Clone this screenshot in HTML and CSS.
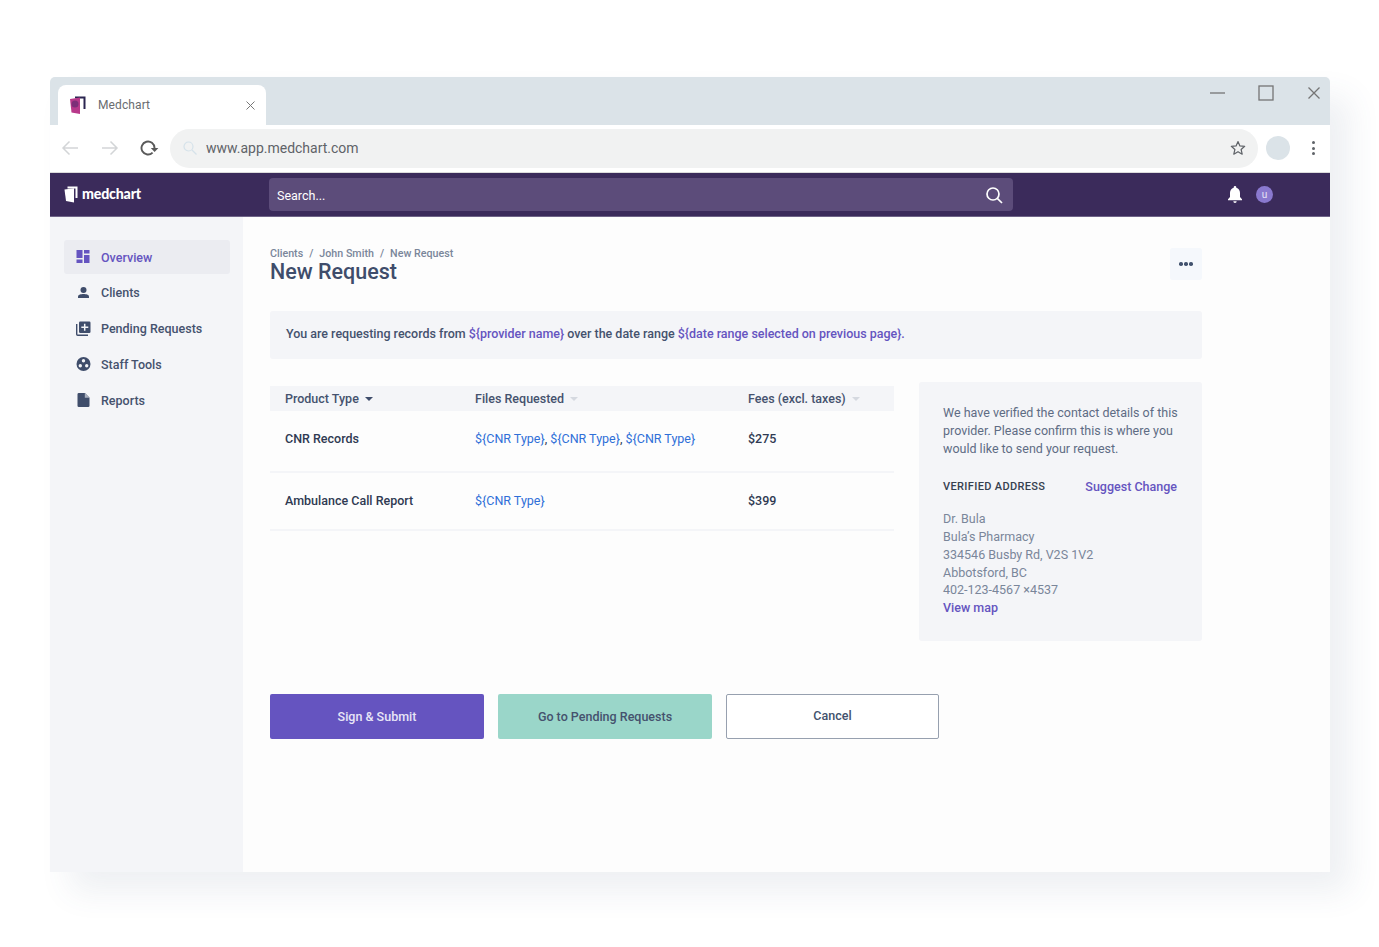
FILE: index.html
```html
<!DOCTYPE html>
<html lang="en">
<head>
<meta charset="utf-8">
<title>Medchart</title>
<link rel="stylesheet" href="styles.css">
</head>
<body>
<div class="window">
  <div class="tabstrip">
    <div class="tab">
      <svg class="favicon" width="18" height="20" viewBox="0 0 18 20"><path d="M6 1.500h10.500V14h-2V3.500H6z" fill="#2b2550"/><path d="M1 4l10-1.500V19L2.500 17.500z" fill="#b8398a"/><circle cx="6" cy="9" r="3.500" fill="#7d2f78"/></svg>
      <span class="tab-title">Medchart</span>
      <svg class="tab-close" width="9" height="9" viewBox="0 0 9 9"><path d="M.5.5l8 8M8.500.5l-8 8" stroke="#777" stroke-width="1" fill="none"/></svg>
    </div>
    <div class="window-controls">
      <svg width="16" height="16" viewBox="0 0 16 16"><path d="M0 8h15" stroke="#757575" stroke-width="1.300"/></svg>
      <svg width="16" height="16" viewBox="0 0 16 16"><rect x="1" y="1" width="14" height="14" fill="none" stroke="#757575" stroke-width="1.300"/></svg>
      <svg width="16" height="16" viewBox="0 0 16 16"><path d="M2.500 2.500l11 11M13.500 2.500l-11 11" stroke="#757575" stroke-width="1.300" fill="none"/></svg>
    </div>
  </div>

  <div class="toolbar">
    <svg class="nav-arrow" width="18" height="16" viewBox="0 0 18 16"><path d="M17 8H2M8.500 1.500L2 8l6.500 6.500" fill="none" stroke="#d3d5d7" stroke-width="1.500"/></svg>
    <svg class="nav-arrow" width="18" height="16" viewBox="0 0 18 16"><path d="M1 8h15M9.500 1.500L16 8l-6.500 6.500" fill="none" stroke="#d3d5d7" stroke-width="1.500"/></svg>
    <svg class="reload" width="21" height="18" viewBox="0 0 21 18"><path d="M12.600 13.600A6.500 6.500 0 1 1 14.500 9" fill="none" stroke="#5a5a5a" stroke-width="1.900"/><path d="M10.800 9h7.600L14.600 13z" fill="#5a5a5a"/></svg>
    <div class="omnibox">
      <svg width="14" height="14" viewBox="0 0 14 14"><circle cx="5.500" cy="5.500" r="4.500" fill="none" stroke="#d5e2ea" stroke-width="1.200"/><path d="M9 9l4.500 4.500" stroke="#d5e2ea" stroke-width="1.200"/></svg>
      <span class="url">www.app.medchart.com</span>
      <svg class="star" width="16" height="16" viewBox="0 0 16 16"><path d="M8 1.500l1.900 4.400 4.800.4-3.600 3.200 1.100 4.700L8 11.700l-4.200 2.500 1.100-4.700L1.300 6.300l4.800-.4z" fill="none" stroke="#5f6368" stroke-width="1.200" stroke-linejoin="round"/></svg>
    </div>
    <span class="profile"></span>
    <span class="kebab"><i></i><i></i><i></i></span>
  </div>

  <header class="appbar">
    <div class="brand">
      <svg width="14" height="17" viewBox="0 0 14 17"><path d="M3.500 0.500H13.500V12H11.500V2.500H3.500z" fill="#fff"/><path d="M0.500 3.500l9.500-1.200V16.500L2 15z" fill="#fff"/></svg>
      <span class="brand-name">medchart</span>
    </div>
    <div class="search">
      <span>Search...</span>
      <svg width="18" height="18" viewBox="0 0 18 18"><circle cx="8" cy="8" r="6" fill="none" stroke="#fff" stroke-width="1.700"/><path d="M12.300 12.300L17 17" stroke="#fff" stroke-width="1.700"/></svg>
    </div>
    <div class="appbar-actions">
      <svg width="16" height="19" viewBox="0 0 16 19"><path d="M8 1a1.300 1.300 0 0 1 1.300 1.300v.4C11.800 3.300 13 5.400 13 8v4l2 2.300v1H1v-1L3 12V8c0-2.600 1.200-4.700 3.700-5.300v-.4A1.300 1.300 0 0 1 8 1z" fill="#fff"/><path d="M6.300 16.300h3.400a1.700 1.700 0 0 1-3.400 0z" fill="#fff"/></svg>
      <span class="avatar">u</span>
    </div>
  </header>

  <div class="body">
    <nav class="sidebar">
      <a class="nav-item active">
        <svg width="14" height="14" viewBox="0 0 14 14"><path d="M0 0h6v8H0zM0 9.500h6V13H0zM7.500 0H13v3.500H7.500zM7.500 5H13v8H7.500z" fill="#6554c0"/></svg>
        <span>Overview</span>
      </a>
      <a class="nav-item">
        <svg width="14" height="14" viewBox="0 0 14 14"><circle cx="7" cy="4" r="3" fill="#3f4d6b"/><path d="M1.500 12v-1.500C1.500 8.700 4.500 8 7 8s5.500.7 5.500 2.500V12z" fill="#3f4d6b"/></svg>
        <span>Clients</span>
      </a>
      <a class="nav-item">
        <svg width="15" height="15" viewBox="0 0 15 15"><path d="M0.700 3v10.300a1 1 0 0 0 1 1H12" fill="none" stroke="#3f4d6b" stroke-width="1.400"/><rect x="3" y="0.500" width="11.500" height="11.500" rx="1.200" fill="#3f4d6b"/><path d="M8.700 2.800v7M5.300 6.300h7" stroke="#f4f5f8" stroke-width="1.500"/></svg>
        <span>Pending Requests</span>
      </a>
      <a class="nav-item">
        <svg width="14" height="14" viewBox="0 0 14 14"><circle cx="7" cy="7" r="7" fill="#3f4d6b"/><circle cx="7" cy="3.800" r="1.700" fill="#f4f5f8"/><circle cx="3.800" cy="8.800" r="1.700" fill="#f4f5f8"/><circle cx="10.200" cy="8.800" r="1.700" fill="#f4f5f8"/></svg>
        <span>Staff Tools</span>
      </a>
      <a class="nav-item">
        <svg width="12" height="14" viewBox="0 0 12 14"><path d="M1.300 0H7.500L12 4.500V12.700a1.300 1.300 0 0 1-1.300 1.300H1.300A1.300 1.300 0 0 1 0 12.700V1.300A1.300 1.300 0 0 1 1.300 0z" fill="#3f4d6b"/><path d="M7.300 0v4.700H12" fill="#f4f5f8" fill-opacity=".6"/></svg>
        <span>Reports</span>
      </a>
    </nav>

    <main class="content">
      <div class="page-head">
        <div>
          <div class="crumbs"><span>Clients</span><span>/</span><span>John Smith</span><span>/</span><span>New Request</span></div>
          <h1>New Request</h1>
        </div>
        <button class="more" aria-label="More"><i></i><i></i><i></i></button>
      </div>

      <p class="notice">You are requesting records from <a>${provider name}</a> over the date range <a>${date range selected on previous page}.</a></p>

      <div class="columns">
        <div class="products">
          <div class="row head">
            <span class="c1">Product Type <i class="caret dark"></i></span>
            <span class="c2">Files Requested <i class="caret"></i></span>
            <span class="c3">Fees (excl. taxes) <i class="caret"></i></span>
          </div>
          <div class="row first">
            <span class="c1">CNR Records</span>
            <span class="c2"><a>${CNR Type}</a>, <a>${CNR Type}</a>, <a>${CNR Type}</a></span>
            <span class="c3">$275</span>
          </div>
          <div class="row second">
            <span class="c1">Ambulance Call Report</span>
            <span class="c2"><a>${CNR Type}</a></span>
            <span class="c3">$399</span>
          </div>
        </div>

        <aside class="verify">
          <p>We have verified the contact details of this provider. Please confirm this is where you would like to send your request.</p>
          <div class="verify-head"><strong>VERIFIED ADDRESS</strong><a>Suggest Change</a></div>
          <address>Dr. Bula<br>Bula’s Pharmacy<br>334546 Busby Rd, V2S 1V2<br>Abbotsford, BC<br>402-123-4567 ×4537<br><a>View map</a></address>
        </aside>
      </div>

      <div class="actions">
        <button class="btn primary">Sign &amp; Submit</button>
        <button class="btn mint">Go to Pending Requests</button>
        <button class="btn outline">Cancel</button>
      </div>
    </main>
  </div>
</div>
</body>
</html>
```
FILE: styles.css
```css
* { box-sizing: border-box; }
html, body { margin: 0; height: 100%; }
body {
  background: #fff;
  font-family: Roboto, "Liberation Sans", sans-serif;
  padding: 77px 49px 0 50px;
  overflow: hidden;
}
a { color: inherit; text-decoration: none; }
svg { display: block; flex: none; }

.window {
  height: 795px;
  display: flex;
  flex-direction: column;
  background: #fdfdfd;
  border-radius: 5px 5px 0 0;
  box-shadow: 20px 20px 32px rgba(70, 90, 120, 0.09);
}

.tabstrip {
  height: 48px;
  flex: none;
  background: #dbe3e8;
  border-radius: 5px 5px 0 0;
  display: flex;
  justify-content: space-between;
  align-items: flex-start;
  padding: 8px 8px 0;
}
.tab {
  width: 208px;
  height: 40px;
  background: #fff;
  border-radius: 8px 8px 0 0;
  display: flex;
  align-items: center;
  padding: 0 11px;
}
.tab-title { margin-left: 11px; padding-bottom: 1px; font-size: 12px; color: #6a6c70; flex: 1; letter-spacing: .1px; }
.window-controls { display: flex; gap: 32px; }

.toolbar {
  height: 48px;
  flex: none;
  background: #fff;
  border-bottom: 1px solid #dcdcdc;
  display: flex;
  align-items: center;
  padding: 0 0 1px 11px;
}
.nav-arrow { margin-right: 22px; }
.reload { margin-left: -1px; }
.omnibox {
  width: 1088px;
  height: 39px;
  margin: 0 8px 0 9px;
  border-radius: 20px;
  background: #f1f2f2;
  display: flex;
  align-items: center;
  padding: 0 12px 0 13px;
}
.url { margin-left: 9px; flex: 1; font-size: 14px; color: #5f6368; letter-spacing: 0; }
.profile { width: 24px; height: 24px; border-radius: 50%; background: #dbe3e8; }
.kebab { display: flex; flex-direction: column; gap: 2.500px; margin-left: 22px; }
.kebab i { width: 3px; height: 3px; border-radius: 50%; background: #5f6368; }

.appbar {
  height: 44px;
  flex: none;
  background: #3b2b5b;
  border-bottom: 1px solid #6f6488;
  display: flex;
  align-items: center;
  padding-left: 14px;
}
.brand { width: 205px; display: flex; align-items: center; gap: 4px; color: #fff; }
.brand-name { font-family: Lato, Roboto, sans-serif; font-weight: 900; font-size: 14.200px; letter-spacing: -.2px; margin-top: -2px; }
.search {
  width: 744px;
  height: 33px;
  background: #5c4c7a;
  border-radius: 4px;
  display: flex;
  align-items: center;
  justify-content: space-between;
  padding: 1px 10px 0 8px;
  color: #fff;
  font-size: 12.500px;
}
.appbar-actions { display: flex; align-items: center; gap: 13px; margin-left: 214px; }
.avatar {
  width: 17px; height: 17px;
  border-radius: 50%;
  background: #8a79cf;
  color: #e8e4f6;
  font-size: 10px;
  display: flex; align-items: center; justify-content: center;
}

.body { flex: 1; display: flex; min-height: 0; }

.sidebar {
  width: 193px;
  flex: none;
  background: #f4f5f8;
  padding: 23px 13px 0 14px;
  display: flex;
  flex-direction: column;
  gap: 1.750px;
}
.nav-item {
  height: 34px;
  border-radius: 3px;
  display: flex;
  align-items: center;
  padding-left: 12px;
  color: #45526e;
  font-size: 12.500px;
  font-weight: 500;
}
.nav-item svg { margin-right: 10px; width: 15px; }
.nav-item.active { background: #ebecf1; color: #6554c0; }

.content { flex: 1; padding: 30px 128px 0 27px; }
.page-head { display: flex; justify-content: space-between; align-items: flex-start; }
.crumbs { display: flex; gap: 6px; font-size: 10.700px; font-weight: 500; color: #7a869a; line-height: 12px; margin-top: 1px; }
h1 { margin: -1px 0 0; font-size: 21.500px; line-height: 26px; font-weight: 500; color: #3f4d6b; }
.more {
  width: 32px; height: 32px;
  margin-top: 1px;
  border: 0; padding: 0;
  border-radius: 3px;
  background: #f5f8fc;
  display: flex; align-items: center; justify-content: center; gap: 1.500px;
}
.more i { width: 3.500px; height: 3.500px; border-radius: 50%; background: #42526e; }

.notice {
  margin: 26px 0 0;
  height: 48px;
  background: #f4f5f8;
  border-radius: 3px;
  padding: 0 16px 3px;
  display: flex;
  align-items: center;
  gap: .25em;
  font-size: 12.480px;
  font-weight: 500;
  color: #45526e;
}
.notice a { color: #6554c0; }

.columns { display: flex; justify-content: space-between; margin-top: 23px; }
.products { width: 624px; padding-top: 4px; }
.row { display: flex; align-items: center; padding-left: 15px; font-size: 12.500px; font-weight: 500; color: #2f3a52; }
.row.head { height: 25px; background: #f4f5f8; color: #45526e; }
.row.first { height: 62px; padding-bottom: 6px; border-bottom: 2px solid #f4f5f8; }
.row.second { height: 58px; padding-bottom: 2px; border-bottom: 2px solid #f4f5f8; }
.c1 { width: 190px; flex: none; }
.c2 { width: 273px; flex: none; }
.first .c2, .second .c2 { font-weight: 400; }
.c2 a { color: #2f6fd8; }
.caret { display: inline-block; width: 0; height: 0; margin-left: 3px; vertical-align: 2px; border: 4px solid transparent; border-bottom: 0; border-top-color: #d5d9e0; }
.caret.dark { border-top-color: #3f4d6b; }

.verify {
  width: 283px;
  height: 259px;
  background: #f4f5f8;
  border-radius: 3px;
  padding: 22px 20px 0 24px;
  font-size: 12.500px;
  line-height: 17.800px;
  color: #5e6c84;
}
.verify p { margin: 0; }
.verify-head { display: flex; justify-content: space-between; align-items: center; margin: 21px 5px 0 0; }
.verify-head strong { font-size: 11px; font-weight: 500; color: #36404f; letter-spacing: .35px; }
.verify-head a { color: #6554c0; font-weight: 500; }
address { margin-top: 14px; font-style: normal; color: #7a869a; }
address a { color: #6554c0; font-weight: 500; }

.actions { display: flex; gap: 14px; margin-top: 53px; }
.btn {
  width: 214px;
  height: 45px;
  border-radius: 2px;
  border: 0;
  font-family: inherit;
  font-size: 12.500px;
  font-weight: 500;
}
.primary { background: #6554c0; color: #e8e6f7; }
.mint { background: #9ad6c9; color: #45526e; }
.outline { width: 213px; background: #fff; border: 1px solid #97a0af; color: #42526e; padding-bottom: 3px; }
```
